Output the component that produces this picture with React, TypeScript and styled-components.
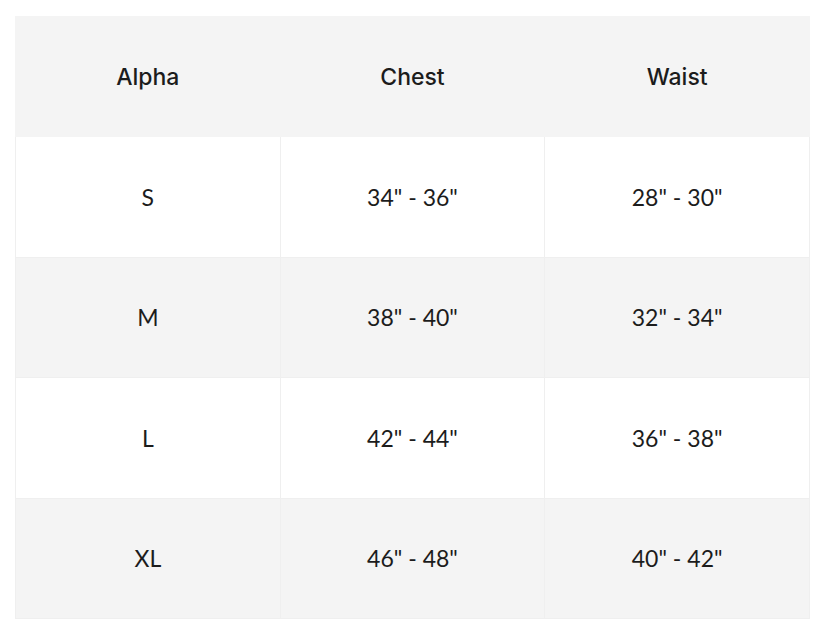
import React from "react";
import styled, { createGlobalStyle } from "styled-components";

const Global = createGlobalStyle`
  html, body { margin: 0; padding: 0; background: #ffffff; }
  body { font-family: "Inter", "Liberation Sans", sans-serif; color: #1f1f1f; }
`;

const Page = styled.div`
  padding: 16px 0 0 15px;
`;

const Table = styled.table`
  width: 795px;
  border-collapse: collapse;
  table-layout: fixed;
`;

const HeadCell = styled.th`
  height: 119px;
  padding: 0;
  background: #f4f4f4;
  font-family: "Inter", "Liberation Sans", sans-serif;
  font-weight: 500;
  font-size: 23px;
  color: #1c1c1c;
  text-align: center;
  vertical-align: middle;
  border: 1px solid #f4f4f4;
`;

const Row = styled.tr<{ $shaded: boolean }>`
  background: ${(p) => (p.$shaded ? "#f4f4f4" : "#ffffff")};
`;

const Cell = styled.td`
  height: 119.5px;
  padding: 0;
  font-family: "Lato", "Open Sans", sans-serif;
  font-size: 23px;
  color: #1c1c1c;
  text-align: center;
  vertical-align: middle;
  border: 1px solid #efefef;
`;

const rows = [
  ["S", '34" - 36"', '28" - 30"'],
  ["M", '38" - 40"', '32" - 34"'],
  ["L", '42" - 44"', '36" - 38"'],
  ["XL", '46" - 48"', '40" - 42"'],
];

export default function App() {
  return (
    <Page>
      <Global />
      <Table>
        <thead>
          <tr>
            <HeadCell>Alpha</HeadCell>
            <HeadCell>Chest</HeadCell>
            <HeadCell>Waist</HeadCell>
          </tr>
        </thead>
        <tbody>
          {rows.map((r, i) => (
            <Row key={r[0]} $shaded={i % 2 === 1}>
              {r.map((c, j) => (
                <Cell key={j}>{c}</Cell>
              ))}
            </Row>
          ))}
        </tbody>
      </Table>
    </Page>
  );
}
